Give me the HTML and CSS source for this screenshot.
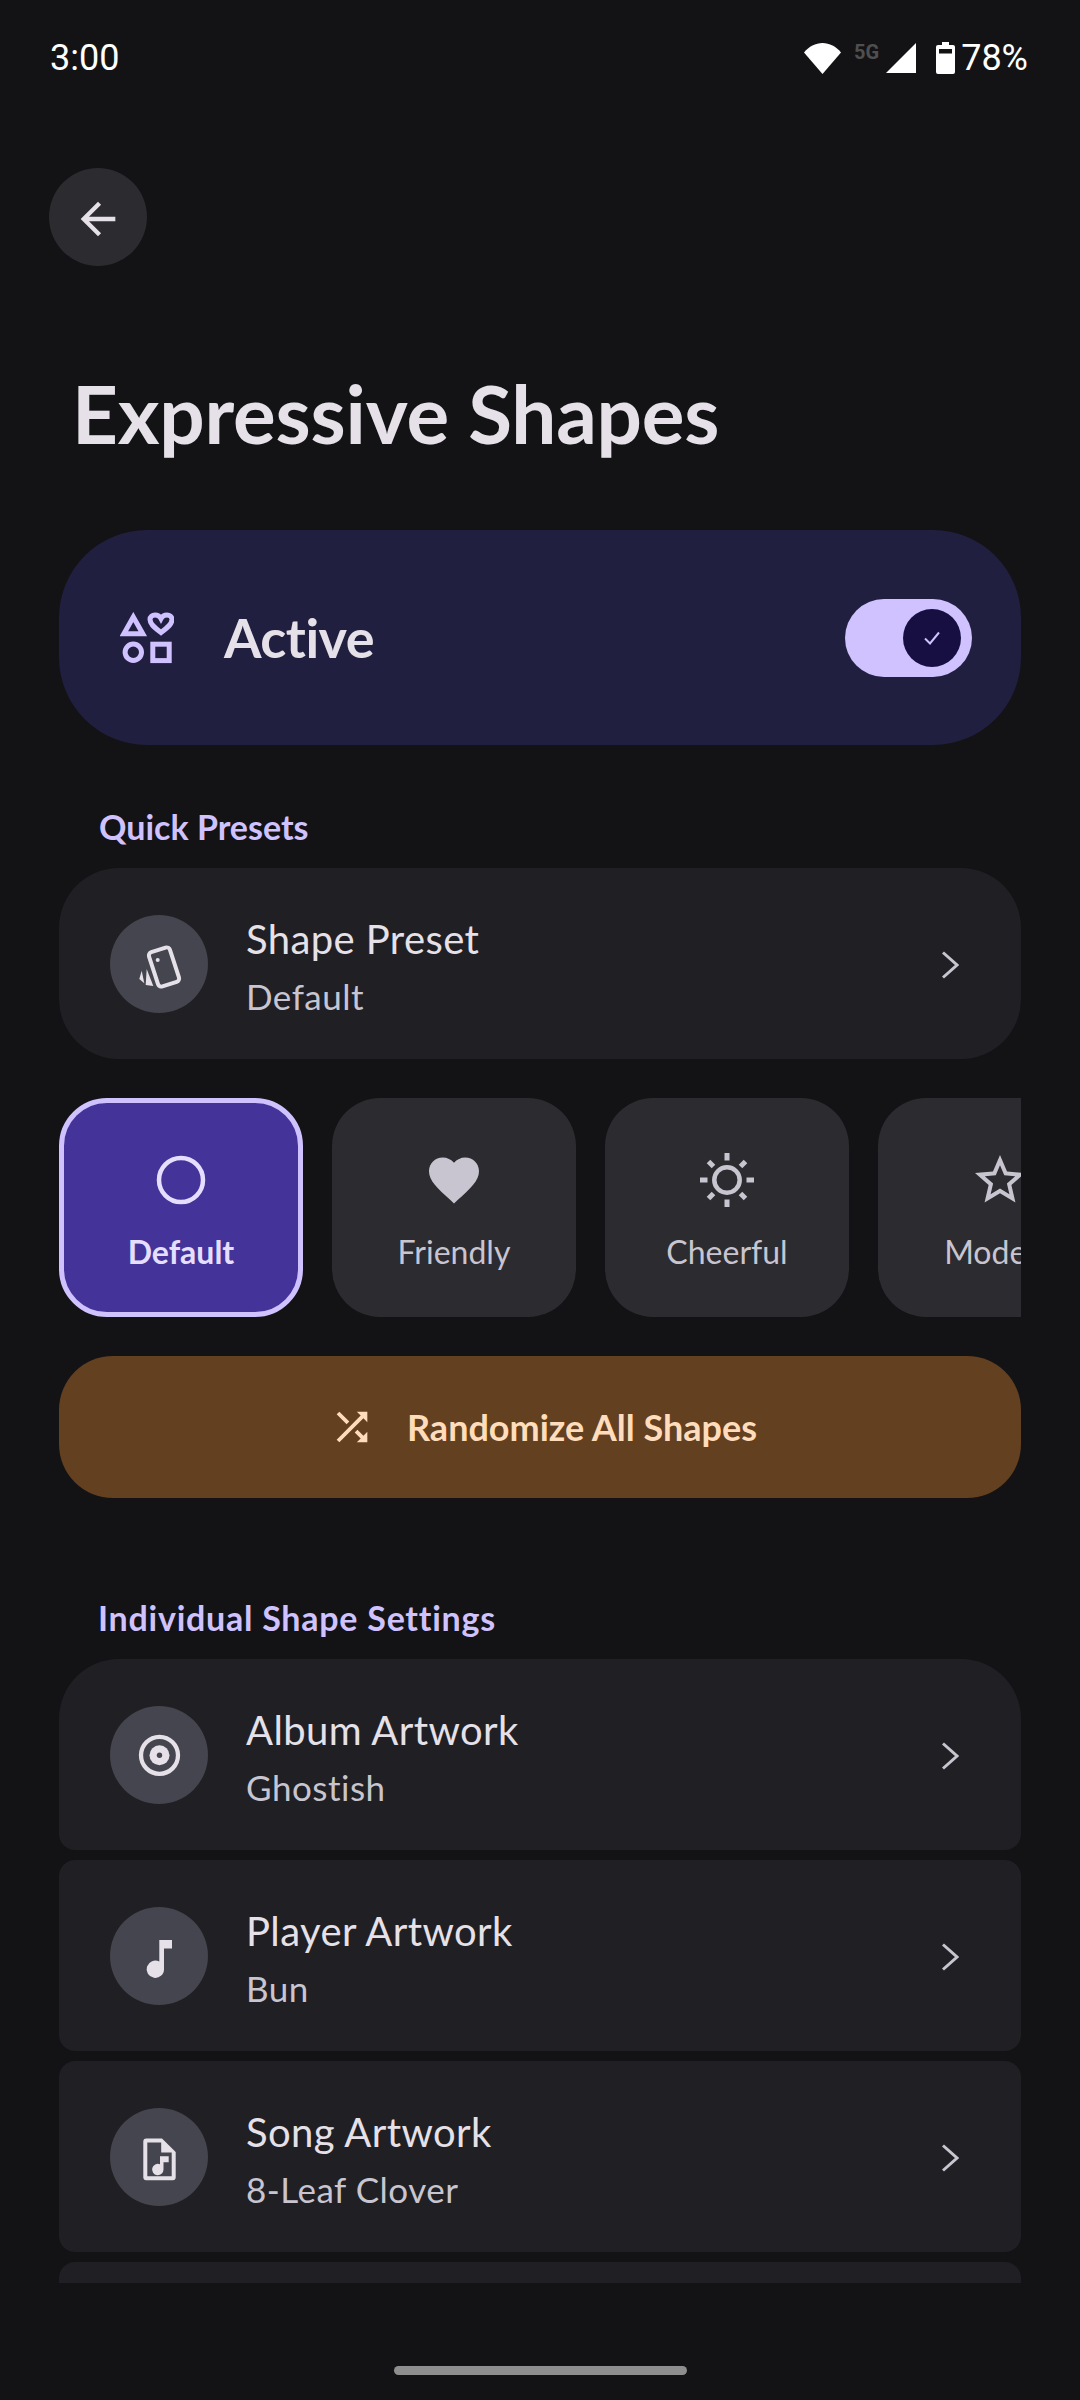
FILE: index.html
```html
<!DOCTYPE html>
<html lang="en">
<head>
  <meta charset="UTF-8">
  <meta name="viewport" content="width=device-width, initial-scale=1.0">
  <title>Expressive Shapes</title>
  <link rel="stylesheet" href="styles.css">
</head>
<body>
  <div class="status-bar">
    <span class="time">3:00</span>
    <div class="status-icons">
      <svg class="wifi" width="37" height="31" viewBox="0 0 37 31"><path d="M18.5 31 0 9.5C5 3.5 11.500 0 18.500 0S32 3.500 37 9.500z" fill="#fff"/></svg>
      <span class="net">5G</span>
      <svg class="signal" width="30" height="30" viewBox="0 0 30 30"><path d="M30 0v30H0z" fill="#fff"/></svg>
      <svg class="battery" width="19" height="32" viewBox="0 0 19 32"><path d="M6 0h7v3h4a2 2 0 0 1 2 2v25a2 2 0 0 1-2 2H2a2 2 0 0 1-2-2V5a2 2 0 0 1 2-2h4z" fill="#fff"/><rect x="3" y="7" width="13" height="4.500" fill="#131316"/></svg>
      <span class="percent">78%</span>
    </div>
  </div>

  <button class="back-button">
    <svg width="52" height="52" viewBox="0 0 24 24"><path d="M20 11H7.830l5.590-5.590L12 4l-8 8 8 8 1.410-1.410L7.830 13H20v-2z" fill="#e6e1e9"/></svg>
  </button>

  <h1 class="page-title">Expressive Shapes</h1>

  <div class="content">
    <div class="active-card">
      <svg class="active-icon" width="54" height="52" viewBox="0 0 54 52">
        <path d="M13.300 5 3.800 21.800h19z" fill="none" stroke="#cfc2ff" stroke-width="5"/>
        <path d="M41 20.500C33 14.500 30 11.500 30 7.500 30 4.500 32.300 3 35 3c2.500 0 4.800 1.200 6 3.500C42.200 4.200 44.500 3 47 3c2.700 0 5 1.500 5 4.500 0 4-3 7-11 13z" fill="none" stroke="#cfc2ff" stroke-width="5"/>
        <circle cx="13.300" cy="40.300" r="8.200" fill="none" stroke="#cfc2ff" stroke-width="5"/>
        <rect x="32.800" y="32.200" width="16.400" height="16.400" fill="none" stroke="#cfc2ff" stroke-width="5"/>
      </svg>
      <span class="active-label">Active</span>
      <div class="switch">
        <div class="switch-thumb">
          <svg width="24" height="24" viewBox="0 0 24 24"><path d="m5 12.500 5 5L19 6.500" fill="none" stroke="#cfc2ff" stroke-width="2"/></svg>
        </div>
      </div>
    </div>

    <h2 class="section-label first">Quick Presets</h2>

    <div class="row-card rounded">
      <div class="row-icon">
        <svg width="60" height="60" viewBox="0 0 60 60">
          <rect x="24" y="15" width="22" height="36" rx="3.500" transform="rotate(-18 35 33)" fill="none" stroke="#e6e1e9" stroke-width="4"/>
          <circle cx="28.700" cy="26" r="2" fill="#e6e1e9"/>
          <path d="M17.700 35 24.300 52 16.700 51z" fill="#e6e1e9"/>
          <path d="M12.700 36.700 15.300 49.300 10.300 45z" fill="#e6e1e9"/>
        </svg>
      </div>
      <div class="row-text">
        <div class="row-title">Shape Preset</div>
        <div class="row-sub">Default</div>
      </div>
      <svg class="chevron" width="18" height="28" viewBox="0 0 18 28"><path d="m2 1.500 14 12.500L2 26.500" fill="none" stroke="#c8c5d0" stroke-width="3"/></svg>
    </div>

    <div class="preset-row">
      <div class="preset selected">
        <svg width="60" height="60" viewBox="0 0 60 60"><circle cx="30" cy="30" r="22" fill="none" stroke="#e6deff" stroke-width="4.500"/></svg>
        <span class="preset-name">Default</span>
      </div>
      <div class="preset">
        <svg width="60" height="60" viewBox="0 0 24 24"><path d="M12 21.350l-1.450-1.320C5.400 15.360 2 12.280 2 8.500 2 5.420 4.420 3 7.500 3c1.740 0 3.410.81 4.500 2.090C13.090 3.810 14.760 3 16.500 3 19.580 3 22 5.420 22 8.500c0 3.780-3.400 6.860-8.550 11.540L12 21.350z" fill="#c8c5d0"/></svg>
        <span class="preset-name">Friendly</span>
      </div>
      <div class="preset">
        <svg width="60" height="60" viewBox="0 0 60 60" fill="none" stroke="#c8c5d0">
          <circle cx="30" cy="30" r="12.700" stroke-width="4.500"/>
          <path d="M30 3v7.500M30 49.500V57M3 30h7.500M49.500 30H57M11.500 11.500l5 5M43.500 43.500l5 5M11.500 48.500l5-5M43.500 16.500l5-5" stroke-width="5"/>
        </svg>
        <span class="preset-name">Cheerful</span>
      </div>
      <div class="preset">
        <svg width="60" height="60" viewBox="0 0 24 24"><path d="M22 9.240l-7.190-.62L12 2 9.190 8.630 2 9.240l5.460 4.730L5.820 21 12 17.270 18.180 21l-1.630-7.030L22 9.240zM12 15.400l-3.760 2.270 1-4.280-3.320-2.880 4.380-.38L12 6.100l1.710 4.040 4.380.38-3.320 2.880 1 4.280L12 15.400z" fill="#c8c5d0"/></svg>
        <span class="preset-name">Modern</span>
      </div>
    </div>

    <div class="random-button">
      <svg width="46" height="46" viewBox="0 0 24 24"><path d="M10.590 9.170L5.410 4 4 5.410l5.170 5.170 1.420-1.410zM14.500 4l2.040 2.040L4 18.590 5.410 20 17.960 7.460 20 9.500V4h-5.500zm.33 9.410l-1.410 1.410 3.130 3.130L14.500 20H20v-5.500l-2.040 2.040-3.130-3.130z" fill="#ffdcbb"/></svg>
      <span>Randomize All Shapes</span>
    </div>

    <h2 class="section-label second">Individual Shape Settings</h2>

    <div class="row-list">
      <div class="row-card top">
        <div class="row-icon">
          <svg width="60" height="60" viewBox="0 0 60 60"><circle cx="30.500" cy="30.300" r="18.500" fill="none" stroke="#e6e1e9" stroke-width="4.300"/><circle cx="30.500" cy="30.300" r="10" fill="#e6e1e9"/><circle cx="30.500" cy="30.300" r="2.700" fill="#45454f"/></svg>
        </div>
        <div class="row-text">
          <div class="row-title">Album Artwork</div>
          <div class="row-sub">Ghostish</div>
        </div>
        <svg class="chevron" width="18" height="28" viewBox="0 0 18 28"><path d="m2 1.500 14 12.500L2 26.500" fill="none" stroke="#c8c5d0" stroke-width="3"/></svg>
      </div>
      <div class="row-card">
        <div class="row-icon">
          <svg width="60" height="60" viewBox="0 0 60 60"><path d="M30.300 14H43v8.500H35v20.700a8.700 8.700 0 1 1-4.700-7.700z" fill="#e6e1e9"/></svg>
        </div>
        <div class="row-text">
          <div class="row-title">Player Artwork</div>
          <div class="row-sub">Bun</div>
        </div>
        <svg class="chevron" width="18" height="28" viewBox="0 0 18 28"><path d="m2 1.500 14 12.500L2 26.500" fill="none" stroke="#c8c5d0" stroke-width="3"/></svg>
      </div>
      <div class="row-card">
        <div class="row-icon">
          <svg width="60" height="60" viewBox="0 0 60 60">
            <path fill-rule="evenodd" d="M17.300 11.500H33L46.700 25v25.200a3 3 0 0 1-3 3H17.300a3 3 0 0 1-3-3V14.500a3 3 0 0 1 3-3zM18.300 15.500v33.700h24.400V25.500H32.200v-10z" fill="#e6e1e9"/>
            <path d="M31 29.200h8.700v6h-5.200v7.300a5.700 5.700 0 1 1-3.500-5.200z" fill="#e6e1e9"/>
          </svg>
        </div>
        <div class="row-text">
          <div class="row-title">Song Artwork</div>
          <div class="row-sub">8-Leaf Clover</div>
        </div>
        <svg class="chevron" width="18" height="28" viewBox="0 0 18 28"><path d="m2 1.500 14 12.500L2 26.500" fill="none" stroke="#c8c5d0" stroke-width="3"/></svg>
      </div>
      <div class="row-card"></div>
    </div>
  </div>

  <div class="home-bar"></div>
</body>
</html>
```

FILE: styles.css
```css
* {
  margin: 0;
  padding: 0;
  box-sizing: border-box;
  font-family: Lato, sans-serif;
}

body {
  width: 1080px;
  height: 2400px;
  background-color: #131316;
  color: #e6e1e9;
  overflow: hidden;
}

.status-bar {
  height: 114px;
  padding: 2px 52px 0 50px;
  display: flex;
  justify-content: space-between;
  align-items: center;
  color: #fff;
}

.time,
.percent {
  font-family: Roboto, sans-serif;
  font-size: 36px;
}

.status-icons {
  display: flex;
  align-items: center;
}

.net {
  font-family: Roboto, sans-serif;
  font-size: 20px;
  font-weight: 700;
  color: #4f4f4f;
  margin: 0 7px 13px 13px;
}

.battery {
  margin: 0 6px 0 20px;
}

.back-button {
  display: flex;
  align-items: center;
  justify-content: center;
  width: 98px;
  height: 98px;
  margin: 54px 0 0 49px;
  padding-top: 3px;
  border: none;
  border-radius: 50%;
  background-color: #2b2b30;
}

.page-title {
  margin: 102px 0 72px 72px;
  font-size: 80px;
  line-height: 90px;
  font-weight: 700;
  letter-spacing: -0.2px;
}

.content {
  height: 1753px;
  margin: 0 59px;
  overflow: hidden;
}

.active-card {
  display: flex;
  align-items: center;
  height: 215px;
  padding: 0 49px 0 61px;
  border-radius: 88px;
  background-color: #211f3f;
}

.active-label {
  flex: 1;
  margin-left: 50px;
  font-size: 54px;
  font-weight: 700;
  letter-spacing: -0.5px;
}

.switch {
  display: flex;
  align-items: center;
  justify-content: flex-end;
  width: 127px;
  height: 78px;
  padding-right: 11px;
  border-radius: 39px;
  background-color: #cfc2ff;
}

.switch-thumb {
  display: flex;
  align-items: center;
  justify-content: center;
  width: 58px;
  height: 58px;
  border-radius: 50%;
  background-color: #170f42;
}

.section-label {
  margin-left: 40px;
  font-size: 34px;
  line-height: 44px;
  font-weight: 700;
  color: #cfc2ff;
}

.section-label.first {
  margin-top: 60px;
  margin-bottom: 19px;
}

.section-label.second {
  margin-top: 98px;
  margin-bottom: 19px;
  margin-left: 39px;
  letter-spacing: 0.75px;
}

.row-card {
  display: flex;
  align-items: center;
  height: 191px;
  padding: 0 62px 0 51px;
  border-radius: 16px;
  background-color: #1f1f24;
}

.row-card.rounded {
  border-radius: 60px;
}

.row-card.top {
  border-radius: 60px 60px 16px 16px;
}

.row-list {
  display: flex;
  flex-direction: column;
  gap: 10px;
}

.row-icon {
  display: flex;
  align-items: center;
  justify-content: center;
  flex-shrink: 0;
  width: 98px;
  height: 98px;
  border-radius: 50%;
  background-color: #45454f;
}

.row-text {
  flex: 1;
  margin-left: 38px;
  padding-top: 3px;
}

.row-title {
  font-size: 40px;
  line-height: 50px;
  letter-spacing: 0.4px;
  color: #e6e1e9;
}

.row-sub {
  margin-top: 11px;
  font-size: 35px;
  line-height: 42px;
  letter-spacing: 0.5px;
  color: #c8c5d0;
}

.chevron {
  margin-top: 2px;
}

.preset-row {
  display: flex;
  gap: 29px;
  margin-top: 39px;
  overflow: hidden;
}

.preset {
  display: flex;
  flex-direction: column;
  align-items: center;
  flex-shrink: 0;
  gap: 23px;
  width: 244px;
  height: 219px;
  padding-top: 52px;
  border-radius: 48px;
  background-color: #2b2b30;
}

.preset.selected {
  padding-top: 47px;
  border: 5px solid #cfc2ff;
  background-color: #443399;
}

.preset-name {
  font-size: 32px;
  line-height: 38px;
  color: #c8c5d0;
}

.selected .preset-name {
  font-weight: 700;
  color: #e6deff;
}

.random-button {
  display: flex;
  align-items: center;
  justify-content: center;
  gap: 32px;
  height: 142px;
  margin-top: 39px;
  padding-left: 6px;
  border-radius: 54px;
  background-color: #634020;
  color: #ffdcbb;
  font-size: 36px;
  font-weight: 700;
}

.home-bar {
  width: 293px;
  height: 9px;
  margin: 83px auto 0;
  border-radius: 5px;
  background-color: #8e8e8e;
}
```
